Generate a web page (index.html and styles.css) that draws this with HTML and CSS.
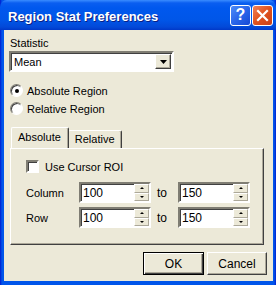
FILE: index.html
```html
<!DOCTYPE html>
<html>
<head>
    <title>Region Stat Preferences</title>
    <link rel="stylesheet" href="styles.css">
</head>
<body>
    <div class="window">
        <div class="titlebar">
            <span class="title">Region Stat Preferences</span>
            <span class="cap-btn help">?</span>
            <span class="cap-btn close">
                <svg width="13" height="13" viewBox="0 0 13 13">
                    <path d="M2 2 L11 11 M11 2 L2 11" stroke="#fff" stroke-width="2.2" stroke-linecap="square" />
                </svg>
            </span>
        </div>

        <div class="client">
            <div class="label">Statistic</div>
            <div class="combo">
                <span class="combo-text">Mean</span>
                <span class="combo-btn">
                    <svg width="7" height="4" viewBox="0 0 7 4"><path d="M0 0 H7 L3.5 4Z" fill="#000" /></svg>
                </span>
            </div>

            <div class="radios">
                <div class="radio-row"><span class="radio checked"></span>Absolute Region</div>
                <div class="radio-row"><span class="radio"></span>Relative Region</div>
            </div>

            <div class="tabs">
                <span class="tab active">Absolute</span>
                <span class="tab">Relative</span>
            </div>
            <div class="panel">
                <div class="check-row"><span class="check"></span>Use Cursor ROI</div>
                <div class="range-row">
                    <span class="range-label">Column</span>
                    <span class="spin"><span class="spin-text">100</span><span class="spin-btns"><span class="up"></span><span class="down"></span></span></span>
                    <span class="to">to</span>
                    <span class="spin"><span class="spin-text">150</span><span class="spin-btns"><span class="up"></span><span class="down"></span></span></span>
                </div>
                <div class="range-row">
                    <span class="range-label">Row</span>
                    <span class="spin"><span class="spin-text">100</span><span class="spin-btns"><span class="up"></span><span class="down"></span></span></span>
                    <span class="to">to</span>
                    <span class="spin"><span class="spin-text">150</span><span class="spin-btns"><span class="up"></span><span class="down"></span></span></span>
                </div>
            </div>

            <div class="buttons">
                <span class="btn default">OK</span>
                <span class="btn">Cancel</span>
            </div>
        </div>
    </div>
</body>
</html>
```

FILE: styles.css
```css
body {
    margin: 0;
    font-family: "Liberation Sans", Arial, sans-serif;
    font-size: 11px;
    color: #000;
}
.window {
    width: 276px;
    height: 285px;
    box-sizing: border-box;
    padding: 0 3px 4px 4px;
    background: linear-gradient(to right, #0019cf 0, #0055ea 2px, #0055ea 274px, #001ed0 276px);
    display: flex;
    flex-direction: column;
}
.titlebar {
    height: 30px;
    flex-shrink: 0;
    margin: 0 -3px 0 -4px;
    padding: 0 3px 0 8px;
    display: flex;
    align-items: center;
    border-radius: 7px 7px 0 0;
    background: linear-gradient(to bottom, #3a8cff 0, #0a5ef0 3px, #0058ee 8px, #0056e8 20px, #0349d8 27px, #0038c8 30px);
}
.title {
    flex: 1;
    color: #fff;
    font-weight: bold;
    font-size: 13px;
    text-shadow: 1px 1px 0 #0a1f84;
    padding-top: 3px;
}
.cap-btn {
    width: 19px;
    height: 19px;
    border: 1px solid #fff;
    border-radius: 3px;
    margin-left: 1px;
    display: flex;
    align-items: center;
    justify-content: center;
    color: #fff;
}
.help {
    background: linear-gradient(135deg, #4d8cf8 0, #2a66ea 50%, #1648d4 100%);
    font-weight: bold;
    font-size: 16px;
}
.close {
    background: linear-gradient(135deg, #f0825a 0, #e0521e 50%, #c8401a 100%);
}
.client {
    flex: 1;
    background: #ece9d8;
    padding: 7px 0 0 5px;
    display: flex;
    flex-direction: column;
}
.label {
    height: 14px;
    padding-left: 1px;
}
.combo {
    width: 161px;
    height: 17px;
    background: #fff;
    border: 2px solid;
    border-color: #7f7d73 #fff #fff #7f7d73;
    box-shadow: inset 1px 1px 0 #404040;
    display: flex;
    align-items: center;
}
.combo-text {
    flex: 1;
    padding-left: 3px;
}
.combo-btn {
    width: 14px;
    height: 13px;
    margin-right: 1px;
    background: #ece9d8;
    border: 1px solid;
    border-color: #fff #404040 #404040 #fff;
    box-shadow: inset -1px -1px 0 #aca899;
    display: flex;
    align-items: center;
    justify-content: center;
}
.radios {
    margin-top: 12px;
    display: flex;
    flex-direction: column;
    gap: 5px;
}
.radio-row {
    display: flex;
    align-items: center;
    height: 13px;
    padding-left: 1px;
}
.radio {
    width: 11px;
    height: 11px;
    border-radius: 50%;
    border: 1px solid;
    border-color: #7f7d73 #fff #fff #7f7d73;
    background: #fff;
    box-shadow: inset 1px 1px 0 #404040;
    margin-right: 4px;
    position: relative;
}
.radio.checked::after {
    content: "";
    position: absolute;
    left: 4px;
    top: 4px;
    width: 4px;
    height: 4px;
    border-radius: 50%;
    background: #000;
}
.tabs {
    margin-top: 13px;
    padding-left: 2px;
    display: flex;
    align-items: flex-end;
    height: 20px;
    position: relative;
    z-index: 1;
}
.tab {
    height: 17px;
    padding: 0 6px;
    line-height: 17px;
    border: 1px solid;
    border-bottom: none;
    border-color: #fff #404040 #fff #fff;
    box-shadow: inset -1px 0 0 #aca899;
    border-radius: 2px 2px 0 0;
    background: #ece9d8;
}
.tab.active {
    height: 20px;
    line-height: 19px;
    margin-right: -1px;
    padding: 0 7px 0 6px;
    position: relative;
    z-index: 2;
}
.panel {
    box-sizing: border-box;
    width: 254px;
    height: 97px;
    margin-left: 1px;
    border: 1px solid;
    border-color: #fff #404040 #404040 #fff;
    box-shadow: inset -1px -1px 0 #aca899;
    padding: 11px 0 0 15px;
    display: flex;
    flex-direction: column;
    gap: 4px;
}
.check-row {
    display: flex;
    align-items: center;
    height: 13px;
}
.check {
    width: 9px;
    height: 9px;
    border: 2px solid;
    border-color: #7f7d73 #fff #fff #7f7d73;
    background: #fff;
    box-shadow: inset 1px 1px 0 #404040;
    margin-right: 6px;
}
.range-row {
    display: flex;
    align-items: center;
    height: 21px;
}
.check-row + .range-row {
    margin-top: 5px;
}
.range-label {
    width: 53px;
}
.spin {
    width: 68px;
    height: 17px;
    background: #fff;
    border: 2px solid;
    border-color: #7f7d73 #fff #fff #7f7d73;
    box-shadow: inset 1px 1px 0 #404040;
    display: flex;
    align-items: center;
}
.spin-text {
    flex: 1;
    padding-left: 2px;
    font-size: 12px;
}
.spin-btns {
    width: 15px;
    height: 17px;
    display: flex;
    flex-direction: column;
}
.up, .down {
    flex: 1;
    background: #ece9d8;
    border: 1px solid;
    border-color: #fff #aca899 #aca899 #fff;
    position: relative;
}
.up::after, .down::after {
    content: "";
    position: absolute;
    left: 5px;
    top: 2px;
    border-left: 2px solid transparent;
    border-right: 2px solid transparent;
}
.up::after {
    border-bottom: 2px solid #000;
}
.down::after {
    border-top: 2px solid #000;
}
.to {
    width: 27px;
    padding-left: 6px;
    box-sizing: border-box;
    font-size: 12px;
}
.buttons {
    margin-top: 7px;
    padding-right: 6px;
    display: flex;
    justify-content: flex-end;
    gap: 3px;
}
.btn {
    box-sizing: border-box;
    width: 60px;
    height: 23px;
    border: 1px solid;
    border-color: #fff #404040 #404040 #fff;
    box-shadow: inset -1px -1px 0 #aca899;
    display: flex;
    align-items: center;
    justify-content: center;
    font-size: 12px;
    background: #ece9d8;
}
.btn.default {
    width: 61px;
    border-color: #000;
    box-shadow: inset 1px 1px 0 #fff, inset -1px -1px 0 #404040, inset -2px -2px 0 #aca899;
}
```
